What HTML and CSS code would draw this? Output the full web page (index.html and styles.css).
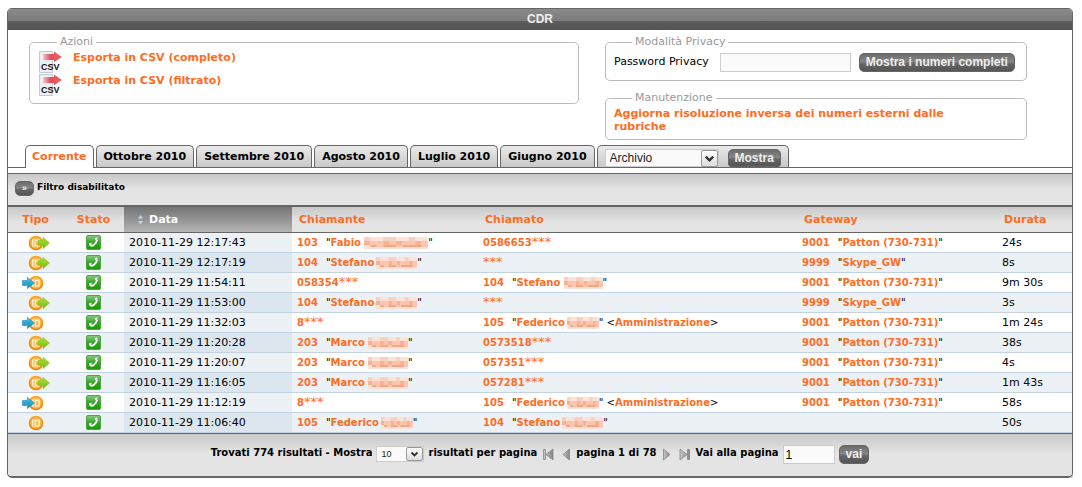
FILE: index.html
```html
<!DOCTYPE html>
<html lang="it">
<head>
<meta charset="utf-8">
<title>CDR</title>
<link rel="stylesheet" href="styles.css">
</head>
<body>
<svg class="defs" aria-hidden="true">
  <defs>
    <linearGradient id="gOrange" x1="0" y1="0" x2="0" y2="1"><stop offset="0" stop-color="#f9a62b"/><stop offset="1" stop-color="#ee7f00"/></linearGradient>
    <linearGradient id="gGreen" x1="0" y1="0" x2="0" y2="1"><stop offset="0" stop-color="#b4e83c"/><stop offset="1" stop-color="#6fb80c"/></linearGradient>
    <linearGradient id="gBlue" x1="0" y1="0" x2="0" y2="1"><stop offset="0" stop-color="#45c4ea"/><stop offset="1" stop-color="#1288b5"/></linearGradient>
    <linearGradient id="gOk" x1="0" y1="0" x2="0" y2="1"><stop offset="0" stop-color="#8ccb86"/><stop offset=".5" stop-color="#35a32a"/><stop offset="1" stop-color="#1c9a00"/></linearGradient>
    <linearGradient id="gRed" x1="0" y1="0" x2="1" y2="0"><stop offset="0" stop-color="#f7c4c6"/><stop offset=".4" stop-color="#dc5058"/><stop offset="1" stop-color="#ee6a6a"/></linearGradient>
    <linearGradient id="gGrey" x1="0" y1="0" x2="1" y2="0"><stop offset="0" stop-color="#c8c8c8"/><stop offset="1" stop-color="#868686"/></linearGradient>
    <symbol id="phone" viewBox="0 0 28 16">
      <circle cx="14" cy="8" r="6.5" fill="#fbb84a" stroke="url(#gOrange)" stroke-width="1.700"/>
      <path d="M10 4.500h8v7h-8z" fill="#fff0c8"/>
      <path d="M12 5v6" stroke="#f5a22e" stroke-width=".8"/>
      <path d="M13.800 6.300h2.700v3.600h-2.700z" fill="#f9b95a"/>
    </symbol>
    <symbol id="out" viewBox="0 0 28 16">
      <use href="#phone"/>
      <path d="M16 5.5h5V2.4L27.4 8 21 13.6v-3.1h-5z" fill="url(#gGreen)" stroke="#86c71f" stroke-width=".7"/>
    </symbol>
    <symbol id="in" viewBox="0 0 28 16">
      <use href="#phone"/>
      <path d="M.4 5.5h5V2.4L12.4 8l-7 5.6v-3.1h-5z" fill="url(#gBlue)" stroke="#2a9cc4" stroke-width=".7"/>
    </symbol>
    <symbol id="ok" viewBox="0 0 15 15">
      <rect x=".5" y=".5" width="14" height="14" rx="1.5" fill="url(#gOk)" stroke="#4aa83e"/>
      <path d="M3.800 9.600C4.800 11.400 6.200 11.100 7.700 10 9.600 8.600 10.800 6.800 11 4.800" fill="none" stroke="#fff" stroke-width="1.800"/>
      <path d="M3.200 9.300 5.600 8.300M9 4.300l2.300-1" stroke="#fff" stroke-width="1.800"/>
    </symbol>
    <symbol id="csv" viewBox="0 0 24 24">
      <path d="M.5 1.500h13v21H.5z" fill="#eceff3" stroke="#c3c9d2"/>
      <path d="M4 4h11V1.500L23 7l-8 5.200V10H4z" fill="url(#gRed)"/>
      <text x="2" y="20" class="csv-label">CSV</text>
    </symbol>
    <symbol id="arrow" viewBox="0 0 16 16"><path d="M4 6l4 4 4-4" fill="none" stroke="#333" stroke-width="2.500"/></symbol>
    <symbol id="first" viewBox="0 0 11 13"><path d="M.5 1.500h2v10h-2zM10 1v11L3 6.500z" fill="url(#gGrey)" stroke="#858585" stroke-width=".8"/></symbol>
    <symbol id="prev" viewBox="0 0 8 13"><path d="M7.500 1v11L1 6.500z" fill="url(#gGrey)" stroke="#858585" stroke-width=".8"/></symbol>
    <symbol id="next" viewBox="0 0 8 13"><path d="M.5 1v11L7 6.500z" fill="url(#gGrey)" stroke="#858585" stroke-width=".8"/></symbol>
    <symbol id="last" viewBox="0 0 11 13"><path d="M8.500 1.500h2v10h-2zM1 1v11l7-5.500z" fill="url(#gGrey)" stroke="#858585" stroke-width=".8"/></symbol>
    <symbol id="mask" viewBox="0 0 40 12" preserveAspectRatio="none">
      <path d="M0 0h40v12H0z" fill="#fbe3da"/>
      <path d="M0 0h4v4H0zM12 0h8v4h-8zM28 0h4v4h-4z" fill="#fad0bf"/>
      <path d="M0 4h4v4H0zM12 4h4v4h-4zM20 4h4v4h-4zM32 4h4v4h-4z" fill="#f8b193"/>
      <path d="M4 4h8v4H4zM16 4h4v4h-4zM24 4h8v4h-8z" fill="#fbc6ae"/>
      <path d="M4 8h4v2H4zM12 8h8v2h-8zM24 8h12v2H24z" fill="#f7a681"/>
      <path d="M8 8h4v2H8zM20 8h4v2h-4zM36 4h4v6h-4z" fill="#fac5b5"/>
    </symbol>
  </defs>
</svg>

<main class="panel">
  <h1 class="title">CDR</h1>

  <div class="tools">
    <fieldset class="box actions">
      <legend>Azioni</legend>
      <a class="export" href="#"><svg width="24" height="24"><use href="#csv"/></svg>Esporta in CSV (completo)</a>
      <a class="export" href="#"><svg width="24" height="24"><use href="#csv"/></svg>Esporta in CSV (filtrato)</a>
    </fieldset>
    <div class="side">
      <fieldset class="box privacy">
        <legend>Modalità Privacy</legend>
        <label for="pwd">Password Privacy</label>
        <input id="pwd" class="field" type="password">
        <button class="btn" type="button">Mostra i numeri completi</button>
      </fieldset>
      <fieldset class="box upkeep">
        <legend>Manutenzione</legend>
        <a href="#">Aggiorna risoluzione inversa dei numeri esterni dalle<br>rubriche</a>
      </fieldset>
    </div>
  </div>

  <nav class="tabs">
    <a class="tab current" href="#">Corrente</a>
    <a class="tab" href="#">Ottobre 2010</a>
    <a class="tab" href="#">Settembre 2010</a>
    <a class="tab" href="#">Agosto 2010</a>
    <a class="tab" href="#">Luglio 2010</a>
    <a class="tab" href="#">Giugno 2010</a>
    <div class="tab archive">
      <span class="pick"><select class="sel" aria-label="Archivio"><option>Archivio</option></select><svg class="drop" width="17" height="17"><use href="#arrow"/></svg></span>
      <button class="btn" type="button">Mostra</button>
    </div>
  </nav>

  <div class="filter"><button class="btn toggle" type="button">»</button><span>Filtro disabilitato</span></div>

  <table class="calls">
    <colgroup><col class="c-type"><col class="c-state"><col class="c-date"><col class="c-from"><col><col class="c-gw"><col class="c-len"></colgroup>
    <thead>
      <tr><th class="mid">Tipo</th><th class="mid">Stato</th><th class="sorted"><svg width="7" height="10" viewBox="0 0 7 10"><path d="M3.500 0 6 3.500H1zM3.500 9.500 6 6H1z" fill="#c9d6e4"/></svg>Data</th><th>Chiamante</th><th>Chiamato</th><th>Gateway</th><th>Durata</th></tr>
    </thead>
    <tbody>
      <tr><td class="mid"><svg width="28" height="16"><use href="#out"/></svg></td><td class="mid"><svg width="15" height="15"><use href="#ok"/></svg></td><td class="date">2010-11-29 12:17:43</td><td><a href="#">103</a><q>"<a href="#">Fabio</a> <svg class="hid" width="64" height="12"><use href="#mask"/></svg>"</q></td><td><a href="#">0586653<i>***</i></a></td><td><a href="#">9001</a><q>"<a href="#">Patton (730-731)</a>"</q></td><td class="len">24s</td></tr>
      <tr><td class="mid"><svg width="28" height="16"><use href="#out"/></svg></td><td class="mid"><svg width="15" height="15"><use href="#ok"/></svg></td><td class="date">2010-11-29 12:17:19</td><td><a href="#">104</a><q>"<a href="#">Stefano</a><svg class="hid near" width="41" height="12"><use href="#mask"/></svg>"</q></td><td><a href="#"><i>***</i></a></td><td><a href="#">9999</a><q>"<a href="#">Skype_GW</a>"</q></td><td class="len">8s</td></tr>
      <tr><td class="mid"><svg width="28" height="16"><use href="#in"/></svg></td><td class="mid"><svg width="15" height="15"><use href="#ok"/></svg></td><td class="date">2010-11-29 11:54:11</td><td><a href="#">058354<i>***</i></a></td><td><a href="#">104</a><q>"<a href="#">Stefano</a> <svg class="hid" width="39" height="12"><use href="#mask"/></svg>"</q></td><td><a href="#">9001</a><q>"<a href="#">Patton (730-731)</a>"</q></td><td class="len">9m 30s</td></tr>
      <tr><td class="mid"><svg width="28" height="16"><use href="#out"/></svg></td><td class="mid"><svg width="15" height="15"><use href="#ok"/></svg></td><td class="date">2010-11-29 11:53:00</td><td><a href="#">104</a><q>"<a href="#">Stefano</a><svg class="hid near" width="41" height="12"><use href="#mask"/></svg>"</q></td><td><a href="#"><i>***</i></a></td><td><a href="#">9999</a><q>"<a href="#">Skype_GW</a>"</q></td><td class="len">3s</td></tr>
      <tr><td class="mid"><svg width="28" height="16"><use href="#in"/></svg></td><td class="mid"><svg width="15" height="15"><use href="#ok"/></svg></td><td class="date">2010-11-29 11:32:03</td><td><a href="#">8<i>***</i></a></td><td><a href="#">105</a><q>"<a href="#">Federico</a><svg class="hid near" width="32" height="12"><use href="#mask"/></svg>"</q> &lt;<a href="#">Amministrazione</a>&gt;</td><td><a href="#">9001</a><q>"<a href="#">Patton (730-731)</a>"</q></td><td class="len">1m 24s</td></tr>
      <tr><td class="mid"><svg width="28" height="16"><use href="#out"/></svg></td><td class="mid"><svg width="15" height="15"><use href="#ok"/></svg></td><td class="date">2010-11-29 11:20:28</td><td><a href="#">203</a><q>"<a href="#">Marco</a> <svg class="hid" width="40" height="12"><use href="#mask"/></svg>"</q></td><td><a href="#">0573518<i>***</i></a></td><td><a href="#">9001</a><q>"<a href="#">Patton (730-731)</a>"</q></td><td class="len">38s</td></tr>
      <tr><td class="mid"><svg width="28" height="16"><use href="#out"/></svg></td><td class="mid"><svg width="15" height="15"><use href="#ok"/></svg></td><td class="date">2010-11-29 11:20:07</td><td><a href="#">203</a><q>"<a href="#">Marco</a> <svg class="hid" width="40" height="12"><use href="#mask"/></svg>"</q></td><td><a href="#">057351<i>***</i></a></td><td><a href="#">9001</a><q>"<a href="#">Patton (730-731)</a>"</q></td><td class="len">4s</td></tr>
      <tr><td class="mid"><svg width="28" height="16"><use href="#out"/></svg></td><td class="mid"><svg width="15" height="15"><use href="#ok"/></svg></td><td class="date">2010-11-29 11:16:05</td><td><a href="#">203</a><q>"<a href="#">Marco</a> <svg class="hid" width="40" height="12"><use href="#mask"/></svg>"</q></td><td><a href="#">057281<i>***</i></a></td><td><a href="#">9001</a><q>"<a href="#">Patton (730-731)</a>"</q></td><td class="len">1m 43s</td></tr>
      <tr><td class="mid"><svg width="28" height="16"><use href="#in"/></svg></td><td class="mid"><svg width="15" height="15"><use href="#ok"/></svg></td><td class="date">2010-11-29 11:12:19</td><td><a href="#">8<i>***</i></a></td><td><a href="#">105</a><q>"<a href="#">Federico</a><svg class="hid near" width="32" height="12"><use href="#mask"/></svg>"</q> &lt;<a href="#">Amministrazione</a>&gt;</td><td><a href="#">9001</a><q>"<a href="#">Patton (730-731)</a>"</q></td><td class="len">58s</td></tr>
      <tr><td class="mid"><svg width="28" height="16"><use href="#phone"/></svg></td><td class="mid"><svg width="15" height="15"><use href="#ok"/></svg></td><td class="date">2010-11-29 11:06:40</td><td><a href="#">105</a><q>"<a href="#">Federico</a><svg class="hid near" width="32" height="12"><use href="#mask"/></svg>"</q></td><td><a href="#">104</a><q>"<a href="#">Stefano</a><svg class="hid near" width="41" height="12"><use href="#mask"/></svg>"</q></td><td></td><td class="len">50s</td></tr>
    </tbody>
  </table>

  <footer class="pager">
    <label for="size">Trovati 774 risultati - Mostra</label>
    <span class="pick small"><select id="size" class="sel"><option>10</option></select><svg class="drop" width="17" height="15"><use href="#arrow"/></svg></span>
    <span>risultati per pagina</span>
    <a class="step" href="#" aria-label="Prima"><svg width="11" height="13"><use href="#first"/></svg></a>
    <a class="step" href="#" aria-label="Precedente"><svg width="8" height="13"><use href="#prev"/></svg></a>
    <span>pagina 1 di 78</span>
    <a class="step" href="#" aria-label="Successiva"><svg width="8" height="13"><use href="#next"/></svg></a>
    <a class="step" href="#" aria-label="Ultima"><svg width="11" height="13"><use href="#last"/></svg></a>
    <label for="page">Vai alla pagina</label>
    <input id="page" class="field" type="text" value="1">
    <button class="btn" type="button">vai</button>
  </footer>
</main>
</body>
</html>
```

FILE: styles.css
```css
* { box-sizing: border-box; }

body {
  margin: 8px 9px 8px 7px;
  background: #fff;
  color: #000;
  font: 11px/12px Verdana, "DejaVu Sans", sans-serif;
}

a { color: #ff6c1f; font-weight: bold; text-decoration: none; }
.defs { position: absolute; width: 0; height: 0; }
.csv-label { font: bold 9px "Liberation Sans", Arial, sans-serif; fill: #111; }

.panel {
  border: 1px solid #666;
  border-bottom-width: 2px;
  border-radius: 5px;
  box-shadow: 4px 5px 5px #d0d0d0;
  overflow: hidden;
}

.title {
  margin: 0;
  height: 21px;
  background: linear-gradient(#8a8a8a, #7c7c7c 55%, #5c5c5c 60%, #535353);
  color: #eee;
  font: bold 12px/21px "Liberation Sans", Arial, sans-serif;
  text-align: center;
}

.tools {
  display: grid;
  grid-template-columns: 550fr 422fr;
  align-items: start;
  gap: 26px;
  padding: 6px 45px 5px 21px;
}
.side { display: grid; gap: 11px; }
.box { margin: 0; min-width: 0; border: 1px solid #bbb; border-radius: 5px; }
.box legend { margin-left: 18px; padding: 0 3px; color: #999; line-height: 12px; }
.actions { padding: 2px 9px 7px; }
.export { display: flex; gap: 10px; height: 23px; line-height: 16px; }
.privacy { padding: 5px 8px 8px; }
.privacy label { display: inline-block; line-height: 17px; margin-right: 8px; }
.privacy .field { width: 131px; margin-right: 4px; }
.privacy .field, .privacy .btn { vertical-align: top; }
.upkeep { padding: 3px 8px 6px; line-height: 13px; }
.upkeep a { display: block; }

.field {
  height: 19px;
  padding: 0 2px;
  border: 1px solid #ccc;
  background: #fafafa;
  font: 12px "Liberation Sans", Arial, sans-serif;
}
.btn {
  height: 19px;
  padding: 0 6px;
  border: 1px solid #666;
  border-radius: 5px;
  background: linear-gradient(#6c6c6c, #858585 45%, #636363 60%, #555);
  color: #eee;
  font: bold 12px/17px "Liberation Sans", Arial, sans-serif;
}

.tabs {
  display: flex;
  gap: 2px;
  height: 23px;
  padding-left: 17px;
  border-bottom: 1px solid #666;
}
.tab {
  padding: 0 7px;
  border: 1px solid #666;
  border-bottom: 0;
  border-radius: 5px 5px 0 0;
  background: linear-gradient(#eaeaea, #c9c9c9);
  color: #000;
  line-height: 22px;
}
.tab.current { height: 23px; padding: 0 6px; background: #fff; color: #ff6c1f; }
.archive { display: flex; gap: 9px; padding-top: 3px; }
.archive .btn { height: 18px; border-radius: 5px 5px 3px 3px; }

.pick { position: relative; display: inline-block; width: 114px; height: 18px; }
.sel {
  appearance: none;
  display: block;
  width: 100%;
  height: 100%;
  padding: 0 4px;
  border: 1px solid #ccc;
  border-radius: 0;
  background: #fafafa;
  color: #222;
  font: 12px "Liberation Sans", Arial, sans-serif;
}
.drop {
  position: absolute;
  top: 1px;
  right: 1px;
  border: 1px solid #999;
  border-radius: 2px;
  background: linear-gradient(#fff, #ddd);
  pointer-events: none;
}

.filter {
  display: flex;
  gap: 3px;
  height: 32px;
  margin-top: 5px;
  padding: 7px 7px 0;
  border-top: 1px solid #666;
  background: linear-gradient(#c8c8c8, #e4e4e4 50%);
  font-size: 9px;
  font-weight: bold;
}
.toggle { width: 19px; height: 15px; padding: 0; font-size: 9px; line-height: 13px; }

.calls { width: 100%; table-layout: fixed; border-collapse: separate; border-spacing: 0; }
.c-type { width: 55px; }
.c-state { width: 61px; }
.c-date { width: 168px; }
.c-from { width: 186px; }
.c-gw { width: 200px; }
.c-len { width: 75px; }
.calls th {
  height: 28px;
  padding: 0 7px;
  border-top: 2px solid #666;
  border-bottom: 1px solid #666;
  background: linear-gradient(#c8c8c8, #e4e4e4 60%);
  color: #ff6c1f;
  text-align: left;
}
.calls .sorted { padding-left: 13px; background: linear-gradient(#747474, #b4b4b4); color: #fff; }
.sorted svg { margin-right: 5px; vertical-align: middle; }
.calls td {
  height: 20px;
  padding: 0 5px;
  border-bottom: 1px solid #c3d2e0;
  font-size: 10px;
  line-height: 19px;
  white-space: nowrap;
}
.calls tr:last-child td { border-bottom-color: #c3d2e0; }
.calls .mid { padding: 0; text-align: center; }
.mid svg { display: block; margin: 0 auto; }
tbody tr:nth-child(even) { background: #ecf1f6; }
.calls .date { background: #ecf1f6; font-size: 11px; }
tbody tr:nth-child(even) .date { background: #dce6ee; }
.calls .len { font-size: 11px; }
.calls q { margin-left: 8px; quotes: none; }
.calls i { font-style: normal; font-weight: normal; font-size: 13px; line-height: 12px; }
.hid { vertical-align: middle; }
.near { margin-left: 2px; }

.pager {
  display: flex;
  justify-content: center;
  gap: 4px;
  height: 43px;
  padding-top: 11px;
  border-top: 1px solid #666;
  background: linear-gradient(#c8c8c8, #e4e4e4 45%);
  font-size: 10px;
  font-weight: bold;
  line-height: 16px;
}
.small { width: 48px; height: 16px; margin-top: 1px; }
.small .sel { font-size: 9px; }
.small .drop { height: 14px; }
.step { padding: 3px 2px 0; height: 19px; }
.pager .field { width: 52px; }
```
